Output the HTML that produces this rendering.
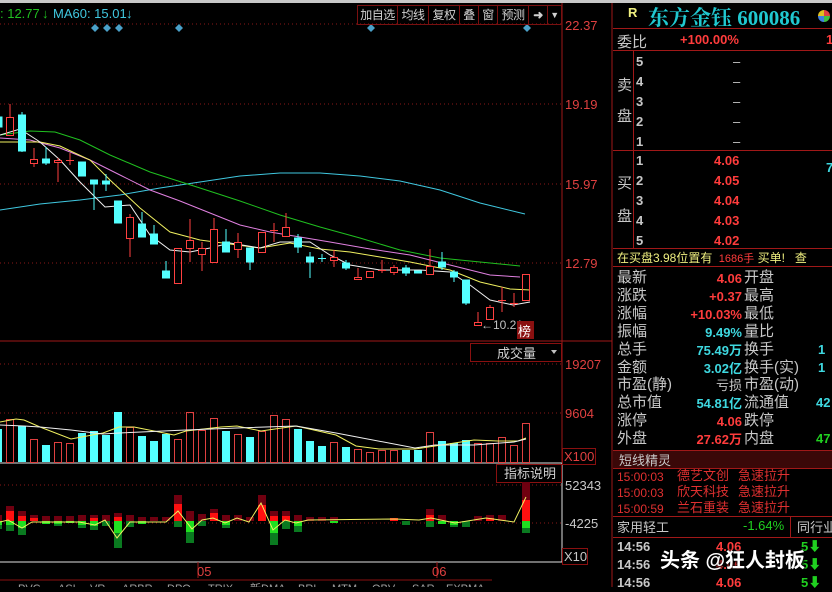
<!DOCTYPE html><html><head><meta charset="utf-8"><style>
body{margin:0;width:832px;height:587px;background:#000;overflow:hidden;position:relative;font-family:"Liberation Sans","Noto Sans CJK SC",sans-serif}
.a{position:absolute;white-space:nowrap}
.l{color:#c8c8c8;font-size:15px;left:617px}
.n{font-weight:bold;font-size:13px;text-align:right;width:130px;left:613px}
.r{color:#ff3c3c}.c{color:#3ed8e0}.g{color:#20d020}
.btn{position:absolute;top:5px;height:18px;border:1px solid #7a1010;color:#d0d0d0;font-size:12px;line-height:18px;text-align:center;white-space:nowrap;overflow:hidden;letter-spacing:-0.5px}
</style></head><body>
<div style="position:absolute;left:0;top:0;width:832px;height:3px;background:#c8c8c8"></div>
<svg class="a" style="left:0;top:0" width="613" height="587">
<g stroke="#8a1818" stroke-dasharray="1,3">
<line x1="0" y1="24" x2="562" y2="24"/><line x1="0" y1="104" x2="562" y2="104"/><line x1="0" y1="184" x2="562" y2="184"/><line x1="0" y1="263" x2="562" y2="263"/>
<line x1="0" y1="364" x2="562" y2="364"/><line x1="0" y1="413" x2="562" y2="413"/><line x1="0" y1="485" x2="562" y2="485"/><line x1="0" y1="523" x2="562" y2="523"/>
</g>
<line x1="562" y1="3" x2="562" y2="462" stroke="#a01818"/>
<line x1="0" y1="341" x2="612" y2="341" stroke="#a01818"/>
<line x1="0" y1="463" x2="562" y2="463" stroke="#e0e0e0"/>
<line x1="562" y1="463" x2="562" y2="562" stroke="#e0e0e0"/>
<line x1="0" y1="562" x2="562" y2="562" stroke="#e0e0e0"/>
<line x1="612" y1="3" x2="612" y2="587" stroke="#a01818"/>
<line x1="198" y1="562" x2="198" y2="578" stroke="#a01818"/><line x1="437" y1="562" x2="437" y2="578" stroke="#a01818"/>
<g fill="#4aa0c8"><path d="M95 24l4 4-4 4-4-4z"/><path d="M107 24l4 4-4 4-4-4z"/><path d="M119 24l4 4-4 4-4-4z"/><path d="M179 24l4 4-4 4-4-4z"/><path d="M371 24l4 4-4 4-4-4z"/><path d="M527 24l4 4-4 4-4-4z"/></g>
<g fill="none" stroke-width="1">
<polyline stroke="#40c8e0" points="0,210 40,204 80,200 120,195 160,188 200,182 240,176 280,173 320,173 360,176 400,181 440,190 480,203 525,214"/>
<polyline stroke="#20c020" points="0,135 30,131 55,132 80,140 110,155 150,172 200,188 240,201 280,215 320,227 360,238 400,250 440,258 480,262 520,266"/>
<polyline stroke="#e080e0" points="0,138 30,140 60,148 90,160 120,175 150,190 180,201 210,213 240,225 270,232 300,237 330,242 370,249 410,255 450,265 490,275 520,277"/>
<polyline stroke="#f0f060" points="0,142 40,142 60,146 90,160 110,180 140,208 170,232 200,240 230,244 260,248 290,243 320,249 350,252 380,257 410,262 450,270 480,282 510,289 530,290"/>
<polyline stroke="#f0f0f0" points="0,135 20,129 40,142 60,160 80,182 105,207 130,205 150,235 170,250 190,252 210,248 230,243 260,248 280,242 310,242 330,255 350,265 380,270 420,270 450,272 470,285 490,300 513,305 530,302"/>
</g>
<g stroke="#ff4040" fill="none">
<line x1="10" y1="104" x2="10" y2="117"/><rect x="6.5" y="117.5" width="7" height="18"/>
<line x1="34" y1="148" x2="34" y2="167"/><rect x="30.5" y="159.5" width="7" height="4" fill="#000"/>
<line x1="58" y1="158" x2="58" y2="182"/><rect x="54.5" y="160.5" width="7" height="2" fill="#000"/>
<line x1="70" y1="153" x2="70" y2="165"/><line x1="66" y1="160.5" x2="74" y2="160.5"/>
<line x1="130" y1="214" x2="130" y2="257"/><rect x="126.5" y="217.5" width="7" height="21" fill="#000"/>
<rect x="174.5" y="248.5" width="7" height="35"/>
<line x1="190" y1="219" x2="190" y2="262"/><rect x="186.5" y="240.5" width="7" height="8" fill="#000"/>
<line x1="202" y1="242" x2="202" y2="271"/><rect x="198.5" y="248.5" width="7" height="6" fill="#000"/>
<line x1="214" y1="218" x2="214" y2="262"/><rect x="210.5" y="229.5" width="7" height="33" fill="#000"/>
<line x1="238" y1="233" x2="238" y2="258"/><rect x="234.5" y="242.5" width="7" height="7" fill="#000"/>
<rect x="258.5" y="232.5" width="7" height="20"/>
<line x1="274" y1="223" x2="274" y2="242"/><line x1="270" y1="230.5" x2="278" y2="230.5"/>
<line x1="286" y1="213" x2="286" y2="236"/><rect x="282.5" y="227.5" width="7" height="9" fill="#000"/>
<line x1="334" y1="250" x2="334" y2="267"/><rect x="330.5" y="257.5" width="7" height="3" fill="#000"/>
<line x1="358" y1="268" x2="358" y2="279"/><rect x="354.5" y="277.5" width="7" height="2" fill="#000"/>
<rect x="366.5" y="271.5" width="7" height="6"/>
<line x1="382" y1="260" x2="382" y2="273"/><line x1="378" y1="270.5" x2="386" y2="270.5"/>
<line x1="394" y1="265" x2="394" y2="275"/><rect x="390.5" y="267.5" width="7" height="5" fill="#000"/>
<line x1="430" y1="249" x2="430" y2="274"/><rect x="426.5" y="266.5" width="7" height="8" fill="#000"/>
<line x1="478" y1="312" x2="478" y2="325"/><rect x="474.5" y="322.5" width="7" height="3" fill="#000"/>
<line x1="490" y1="305" x2="490" y2="319"/><rect x="486.5" y="307.5" width="7" height="12" fill="#000"/>
<line x1="502" y1="287" x2="502" y2="312"/><line x1="498" y1="300.5" x2="506" y2="300.5"/>
<line x1="514" y1="293" x2="514" y2="307"/><line x1="510" y1="303.5" x2="518" y2="303.5"/>
<rect x="522.5" y="274.5" width="7" height="26"/>
</g>
<g fill="#54ffff" stroke="#54ffff">
<rect x="-4" y="117" width="6" height="10"/>
<line x1="22" y1="112" x2="22" y2="152"/><rect x="18.5" y="115" width="7" height="36"/>
<line x1="46" y1="147" x2="46" y2="165"/><rect x="42.5" y="159" width="7" height="4"/>
<rect x="78.5" y="162" width="7" height="14"/>
<line x1="94" y1="180" x2="94" y2="210"/><rect x="90.5" y="180" width="7" height="4"/>
<line x1="106" y1="174" x2="106" y2="191"/><rect x="102.5" y="181" width="7" height="3"/>
<rect x="114.5" y="201" width="7" height="22"/>
<line x1="142" y1="212" x2="142" y2="237"/><rect x="138.5" y="224" width="7" height="13"/>
<line x1="154" y1="225" x2="154" y2="244"/><rect x="150.5" y="234" width="7" height="10"/>
<line x1="166" y1="261" x2="166" y2="278"/><rect x="162.5" y="271" width="7" height="7"/>
<line x1="226" y1="229" x2="226" y2="252"/><rect x="222.5" y="242" width="7" height="10"/>
<line x1="250" y1="248" x2="250" y2="270"/><rect x="246.5" y="248" width="7" height="14"/>
<line x1="298" y1="234" x2="298" y2="253"/><rect x="294.5" y="238" width="7" height="9"/>
<line x1="310" y1="252" x2="310" y2="278"/><rect x="306.5" y="257" width="7" height="5"/>
<line x1="322" y1="254" x2="322" y2="262"/><line x1="318" y1="258.5" x2="326" y2="258.5"/>
<line x1="346" y1="260" x2="346" y2="270"/><rect x="342.5" y="263" width="7" height="5"/>
<line x1="406" y1="265" x2="406" y2="276"/><rect x="402.5" y="268" width="7" height="5"/>
<rect x="414.5" y="271" width="7" height="2"/>
<line x1="442" y1="252" x2="442" y2="270"/><rect x="438.5" y="262" width="7" height="5"/>
<line x1="454" y1="270" x2="454" y2="282"/><rect x="450.5" y="272" width="7" height="5"/>
<line x1="466" y1="280" x2="466" y2="305"/><rect x="462.5" y="280" width="7" height="23"/>
</g>
<text x="481" y="329" fill="#c0c0c0" font-size="12" font-family="Liberation Sans">←10.21</text>
<rect x="517" y="321" width="17" height="18" fill="#8a1010"/><text x="518" y="336" fill="#fff" font-size="13" font-family="Noto Sans CJK SC">榜</text>
<rect x="470.5" y="343.5" width="91" height="18" fill="none" stroke="#8a1010"/>
<text x="497" y="358" fill="#d0d0d0" font-size="13" font-family="Noto Sans CJK SC">成交量</text><path d="M551 350h6l-3 4z" fill="#c0c0c0"/>
<g fill="#54ffff"><rect x="-6" y="429" width="8" height="33"/><rect x="18" y="426" width="8" height="36"/><rect x="42" y="445" width="8" height="17"/><rect x="78" y="433" width="8" height="29"/><rect x="90" y="431" width="8" height="31"/><rect x="102" y="435" width="8" height="27"/><rect x="114" y="412" width="8" height="50"/><rect x="138" y="436" width="8" height="26"/><rect x="150" y="441" width="8" height="21"/><rect x="162" y="434" width="8" height="28"/><rect x="222" y="431" width="8" height="31"/><rect x="246" y="437" width="8" height="25"/><rect x="294" y="429" width="8" height="33"/><rect x="306" y="441" width="8" height="21"/><rect x="318" y="446" width="8" height="16"/><rect x="342" y="447" width="8" height="15"/><rect x="402" y="450" width="8" height="12"/><rect x="414" y="450" width="8" height="12"/><rect x="438" y="441" width="8" height="21"/><rect x="450" y="443" width="8" height="19"/><rect x="462" y="440" width="8" height="22"/></g>
<g fill="none" stroke="#e04040"><rect x="6.5" y="419.5" width="7" height="43"/><rect x="30.5" y="439.5" width="7" height="23"/><rect x="54.5" y="442.5" width="7" height="20"/><rect x="66.5" y="443.5" width="7" height="19"/><rect x="126.5" y="427.5" width="7" height="35"/><rect x="174.5" y="439.5" width="7" height="23"/><rect x="186.5" y="412.5" width="7" height="50"/><rect x="198.5" y="430.5" width="7" height="32"/><rect x="210.5" y="418.5" width="7" height="44"/><rect x="234.5" y="434.5" width="7" height="28"/><rect x="258.5" y="431.5" width="7" height="31"/><rect x="270.5" y="415.5" width="7" height="47"/><rect x="282.5" y="419.5" width="7" height="43"/><rect x="330.5" y="442.5" width="7" height="20"/><rect x="354.5" y="449.5" width="7" height="13"/><rect x="366.5" y="452.5" width="7" height="10"/><rect x="378.5" y="450.5" width="7" height="12"/><rect x="390.5" y="450.5" width="7" height="12"/><rect x="426.5" y="432.5" width="7" height="30"/><rect x="474.5" y="443.5" width="7" height="19"/><rect x="486.5" y="443.5" width="7" height="19"/><rect x="498.5" y="437.5" width="7" height="25"/><rect x="510.5" y="445.5" width="7" height="17"/><rect x="522.5" y="423.5" width="7" height="39"/></g>
<polyline fill="none" stroke="#f0f060" points="0,422 16,419 24,420 40,427 71,439 103,433 119,427 134,427 174,435 186,431 221,427 237,426 261,431 296,426 336,435 356,446 379,449 415,449 435,446 474,440 498,441 518,441 526,438"/>
<polyline fill="none" stroke="#f0f0f0" points="0,425 24,426 40,427 71,430 103,434 119,433 186,430 237,428 296,426 336,433 415,448 435,445 474,445 514,442 526,439"/>
<rect x="496.5" y="464.5" width="65" height="18" fill="none" stroke="#8a1010"/>
<text x="504" y="478" fill="#d0d0d0" font-size="13" font-family="Noto Sans CJK SC">指标说明</text>
<g>
<g fill="#700010"><rect x="-6" y="515" width="8" height="6"/><rect x="6" y="506" width="8" height="15"/><rect x="18" y="511" width="8" height="10"/><rect x="30" y="515" width="8" height="6"/><rect x="42" y="516" width="8" height="5"/><rect x="54" y="516" width="8" height="5"/><rect x="66" y="516" width="8" height="5"/><rect x="78" y="515" width="8" height="6"/><rect x="90" y="515" width="8" height="6"/><rect x="102" y="515" width="8" height="6"/><rect x="114" y="513" width="8" height="8"/><rect x="126" y="515" width="8" height="6"/><rect x="138" y="517" width="8" height="4"/><rect x="150" y="517" width="8" height="4"/><rect x="162" y="517" width="8" height="4"/><rect x="174" y="495" width="8" height="26"/><rect x="186" y="511" width="8" height="10"/><rect x="198" y="514" width="8" height="7"/><rect x="210" y="509" width="8" height="12"/><rect x="222" y="515" width="8" height="6"/><rect x="234" y="515" width="8" height="6"/><rect x="246" y="517" width="8" height="4"/><rect x="258" y="495" width="8" height="26"/><rect x="270" y="511" width="8" height="10"/><rect x="282" y="511" width="8" height="10"/><rect x="294" y="515" width="8" height="6"/><rect x="306" y="517" width="8" height="4"/><rect x="318" y="517" width="8" height="4"/><rect x="330" y="517" width="8" height="4"/><rect x="426" y="509" width="8" height="12"/><rect x="438" y="515" width="8" height="6"/><rect x="474" y="516" width="8" height="5"/><rect x="486" y="515" width="8" height="6"/><rect x="498" y="515" width="8" height="6"/><rect x="522" y="482" width="8" height="39"/></g>
<g fill="#ff1010"><rect x="6" y="511" width="8" height="10"/><rect x="18" y="516" width="8" height="5"/><rect x="30" y="518" width="8" height="3"/><rect x="90" y="518" width="8" height="3"/><rect x="114" y="517" width="8" height="4"/><rect x="174" y="504" width="8" height="17"/><rect x="210" y="513" width="8" height="8"/><rect x="258" y="505" width="8" height="16"/><rect x="270" y="516" width="8" height="5"/><rect x="282" y="516" width="8" height="5"/><rect x="390" y="518" width="8" height="3"/><rect x="426" y="515" width="8" height="6"/><rect x="486" y="518" width="8" height="3"/><rect x="522" y="500" width="8" height="21"/></g>
<g fill="#0a7a20"><rect x="-6" y="521" width="8" height="8"/><rect x="6" y="521" width="8" height="10"/><rect x="18" y="521" width="8" height="14"/><rect x="54" y="521" width="8" height="5"/><rect x="78" y="521" width="8" height="7"/><rect x="90" y="521" width="8" height="9"/><rect x="102" y="521" width="8" height="5"/><rect x="114" y="521" width="8" height="27"/><rect x="126" y="521" width="8" height="6"/><rect x="174" y="521" width="8" height="6"/><rect x="186" y="521" width="8" height="22"/><rect x="198" y="521" width="8" height="5"/><rect x="222" y="521" width="8" height="7"/><rect x="270" y="521" width="8" height="24"/><rect x="282" y="521" width="8" height="8"/><rect x="294" y="521" width="8" height="11"/><rect x="402" y="521" width="8" height="4"/><rect x="426" y="521" width="8" height="6"/><rect x="450" y="521" width="8" height="6"/><rect x="462" y="521" width="8" height="6"/><rect x="522" y="521" width="8" height="12"/></g>
<g fill="#20e020"><rect x="-6" y="521" width="8" height="4"/><rect x="6" y="521" width="8" height="4"/><rect x="18" y="521" width="8" height="7"/><rect x="42" y="521" width="8" height="3"/><rect x="54" y="521" width="8" height="3"/><rect x="66" y="521" width="8" height="2"/><rect x="78" y="521" width="8" height="4"/><rect x="90" y="521" width="8" height="5"/><rect x="114" y="521" width="8" height="12"/><rect x="138" y="521" width="8" height="3"/><rect x="186" y="521" width="8" height="11"/><rect x="222" y="521" width="8" height="4"/><rect x="270" y="521" width="8" height="12"/><rect x="294" y="521" width="8" height="5"/><rect x="330" y="521" width="8" height="2"/><rect x="438" y="521" width="8" height="3"/><rect x="450" y="521" width="8" height="4"/><rect x="522" y="521" width="8" height="7"/></g>
</g>
<polyline fill="none" stroke="#f0f060" points="0,522 8,520 22,528 32,522 79,522 95,525 105,520 117,538 130,522 166,522 178,511 192,529 202,520 213,518 225,523 237,518 249,522 261,503 273,530 285,520 296,523 308,520 395,519 419,520 431,518 455,523 486,518 514,522 526,497"/>
<g font-family="Liberation Sans" font-size="13" fill="#e04040">
<text x="565" y="30">22.37</text><text x="565" y="109">19.19</text><text x="565" y="189">15.97</text><text x="565" y="268">12.79</text>
<text x="565" y="369">19207</text><text x="565" y="418">9604</text>
<rect x="562.5" y="448.5" width="33" height="16" fill="none" stroke="#8a1010"/><text x="564" y="461">X100</text>
<text x="197" y="576">05</text><text x="432" y="576">06</text>
</g>
<g font-family="Liberation Sans" font-size="13" fill="#c8c8c8">
<text x="565" y="490">52343</text><text x="565" y="528">-4225</text>
<rect x="562.5" y="548.5" width="25" height="16" fill="none" stroke="#8a1010"/><text x="564" y="561">X10</text>
</g>
<text x="0" y="18" fill="#20c020" font-size="13">: 12.77</text><text x="42" y="18" fill="#20c020" font-size="13">↓</text>
<text x="53" y="18" fill="#40c8e0" font-size="13">MA60: 15.01</text><text x="126" y="18" fill="#40c8e0" font-size="13">↓</text>
<g font-family="Liberation Sans" font-size="11" fill="#a0a0a0"><text x="18" y="592">PVC</text><text x="58" y="592">ASI</text><text x="90" y="592">VR</text><text x="122" y="592">ARBR</text><text x="167" y="592">DPO</text><text x="208" y="592">TRIX</text><text x="250" y="592">新DMA</text><text x="298" y="592">BRI</text><text x="332" y="592">MTM</text><text x="372" y="592">OBV</text><text x="412" y="592">SAR</text><text x="446" y="592">EXPMA</text></g>
<path d="M0 580H492" stroke="#8a1010"/>
</svg>
<div class="btn" style="left:357px;width:39px">加自选</div><div class="btn" style="left:397px;width:30px">均线</div><div class="btn" style="left:428px;width:30px">复权</div><div class="btn" style="left:459px;width:18px">叠</div><div class="btn" style="left:478px;width:18px">窗</div><div class="btn" style="left:497px;width:30px">预测</div><div class="btn" style="left:528px;width:18px;font-weight:bold">➜</div><div class="btn" style="left:547px;width:13px;font-size:9px">▼</div>

<div class="a" style="left:628px;top:5px;color:#f0f080;font-size:13px;font-weight:bold">R</div>
<div class="a" style="left:648px;top:2px;color:#20c8d0;font-size:21px;font-weight:bold;font-family:'Liberation Serif','Noto Serif CJK SC',serif">东方金钰 600086</div>
<div class="a" style="left:818px;top:10px;width:12px;height:12px;border-radius:50%;background:conic-gradient(#e04040 0 25%,#40c040 0 50%,#4080e0 0 75%,#e0c020 0)"></div>
<div class="a" style="left:613px;top:28px;width:219px;height:0;border-top:1px solid #a01818"></div>
<div class="a" style="left:613px;top:50px;width:219px;border-top:1px solid #a01818"></div>
<div class="a" style="left:613px;top:150px;width:219px;border-top:1px solid #a01818"></div>
<div class="a" style="left:613px;top:248px;width:219px;border-top:1px solid #a01818"></div>
<div class="a" style="left:613px;top:266px;width:219px;border-top:1px solid #a01818"></div>
<div class="a" style="left:633px;top:50px;height:198px;border-left:1px solid #a01818"></div>
<div class="a l" style="top:31px">委比</div><div class="a r" style="left:680px;top:32px;font-size:13px;font-weight:bold">+100.00%</div>
<div class="a l" style="top:74px">卖</div><div class="a l" style="top:105px">盘</div>
<div class="a l" style="top:172px">买</div><div class="a l" style="top:205px">盘</div>
<div class="a" style="left:636px;top:52px;color:#c8c8c8;font-size:13px;font-weight:bold;line-height:20px">5<br>4<br>3<br>2<br>1</div>
<div class="a" style="left:636px;top:151px;color:#c8c8c8;font-size:13px;font-weight:bold;line-height:20px">1<br>2<br>3<br>4<br>5</div>
<div class="a" style="left:733px;top:52px;color:#c8c8c8;font-size:13px;line-height:20px">–<br>–<br>–<br>–<br>–</div>
<div class="a r" style="left:714px;top:151px;font-size:13px;font-weight:bold;line-height:20px">4.06<br>4.05<br>4.04<br>4.03<br>4.02</div>
<div class="a" style="left:617px;top:249px;font-size:12px;color:#f0f080">在买盘3.98位置有 <span class="r" style="font-size:11px">&nbsp;1686手</span> 买单! &nbsp;&nbsp;查</div>
<div class="a l" style="top:269px;line-height:17.9px">最新<br>涨跌<br>涨幅<br>振幅<br>总手<br>金额<br>市盈(静)<br>总市值<br>涨停<br>外盘</div>
<div class="a" style="left:620px;top:270px;width:122px;text-align:right;font-size:13px;font-weight:bold;line-height:17.9px"><span class="r">4.06</span><br><span class="r">+0.37</span><br><span class="r">+10.03%</span><br><span class="c">9.49%</span><br><span class="c">75.49万</span><br><span class="c">3.02亿</span><br><span style="color:#c8c8c8;font-weight:normal">亏损</span><br><span class="c">54.81亿</span><br><span class="r">4.06</span><br><span class="r">27.62万</span></div>
<div class="a" style="left:744px;top:269px;color:#c8c8c8;font-size:15px;line-height:17.9px">开盘<br>最高<br>最低<br>量比<br>换手<br>换手(实)<br>市盈(动)<br>流通值<br>跌停<br>内盘</div>
<div class="a" style="left:818px;top:341px;font-size:13px;font-weight:bold;line-height:17.9px" ><span class="c">1</span><br><span class="c">1</span></div>
<div class="a c" style="left:816px;top:395px;font-size:13px;font-weight:bold">42</div>
<div class="a g" style="left:816px;top:431px;font-size:13px;font-weight:bold">47</div>
<div class="a c" style="left:826px;top:160px;font-size:13px;font-weight:bold">7</div>
<div class="a r" style="left:826px;top:32px;font-size:13px;font-weight:bold">1</div>
<div class="a" style="left:613px;top:450px;width:219px;height:17px;background:#3a0808;border-top:1px solid #a01818;border-bottom:1px solid #a01818"></div>
<div class="a" style="left:619px;top:450px;color:#c8c8c8;font-size:13px">短线精灵</div>
<div class="a" style="left:617px;top:469px;color:#e03030;font-size:12px;line-height:16px">15:00:03<br>15:00:03<br>15:00:59</div>
<div class="a" style="left:677px;top:468px;color:#e03030;font-size:13px;line-height:16px">德艺文创<br>欣天科技<br>兰石重装</div>
<div class="a" style="left:738px;top:468px;color:#e03030;font-size:13px;line-height:16px">急速拉升<br>急速拉升<br>急速拉升</div>
<div class="a" style="left:613px;top:516px;width:219px;border-top:1px solid #a01818"></div>
<div class="a" style="left:613px;top:537px;width:219px;border-top:1px solid #a01818"></div>
<div class="a" style="left:790px;top:516px;height:21px;border-left:1px solid #a01818"></div>
<div class="a" style="left:617px;top:517px;color:#c8c8c8;font-size:13px">家用轻工</div>
<div class="a g" style="left:743px;top:518px;font-size:13px">-1.64%</div>
<div class="a" style="left:797px;top:517px;color:#c8c8c8;font-size:13px">同行业</div>
<div class="a" style="left:617px;top:538px;color:#c8c8c8;font-size:13px;font-weight:bold;line-height:18px">14:56<br>14:56<br>14:56</div>
<div class="a r" style="left:716px;top:538px;font-size:13px;font-weight:bold;line-height:18px">4.06<br>4.06<br>4.06</div>
<div class="a g" style="left:801px;top:538px;font-size:13px;font-weight:bold;line-height:18px">5⬇<br>5⬇<br>5⬇</div>
<div class="a" style="left:660px;top:544px;color:#fff;font-size:20px;font-weight:bold;text-shadow:0 0 3px #000,1px 1px 2px #000">头条 @狂人封板</div>
</body></html>
